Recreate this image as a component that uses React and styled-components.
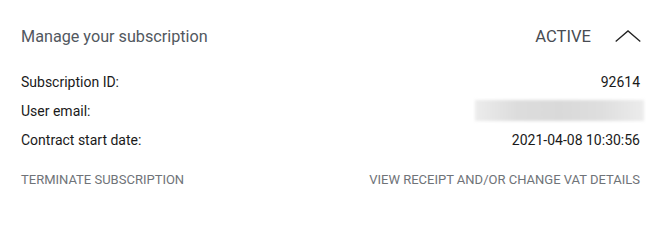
import React from "react";
import styled, { createGlobalStyle } from "styled-components";

const GlobalStyle = createGlobalStyle`
  html, body {
    margin: 0;
    padding: 0;
    background: #ffffff;
  }
  body {
    font-family: Roboto, "Liberation Sans", Arial, sans-serif;
  }
`;

const rows = [
  { label: "Subscription ID:", value: "92614" },
  { label: "User email:", value: null },
  { label: "Contract start date:", value: "2021-04-08 10:30:56" },
];

const App = () => (
  <>
    <GlobalStyle />
    <Card>
      <Header>
        <Title>Manage your subscription</Title>
        <Status>
          <StatusText>ACTIVE</StatusText>
          <ChevronUp />
        </Status>
      </Header>
      <Details>
        {rows.map((row) => (
          <Row key={row.label}>
            <Label>{row.label}</Label>
            {row.value ? <Value>{row.value}</Value> : <Redacted />}
          </Row>
        ))}
      </Details>
      <Actions>
        <ActionLink>Terminate subscription</ActionLink>
        <ActionLink>View receipt and/or change VAT details</ActionLink>
      </Actions>
    </Card>
  </>
);

const ChevronUp = () => (
  <Chevron viewBox="0 0 26 12" width="26" height="12">
    <path d="M0.7 11.5 L13 0.9 L25.3 11.5" fill="none" stroke="#222" strokeWidth="1.3" />
  </Chevron>
);

//STYLED-COMPONENTS

const Card = styled.div`
  width: 662px;
  height: 209px;
  box-sizing: border-box;
  padding: 24px 22px 0 21px;
  background: #fff;
`;

const Header = styled.div`
  display: flex;
  justify-content: space-between;
  align-items: center;
  height: 24px;
`;

const Title = styled.div`
  font-size: 16.2px;
  font-weight: 400;
  color: #525860;
`;

const Status = styled.div`
  display: flex;
  align-items: center;
  gap: 24px;
`;

const StatusText = styled.span`
  font-size: 16.6px;
  color: #484c52;
`;

const Chevron = styled.svg`
  display: block;
  margin-right: -1px;
`;

const Details = styled.div`
  display: flex;
  flex-direction: column;
  margin-top: 19px;
`;

const Row = styled.div`
  display: flex;
  justify-content: space-between;
  align-items: center;
  height: 29px;
  font-size: 14px;
  color: #1a1a1a;
`;

const Label = styled.span``;

const Value = styled.span``;

const Redacted = styled.div`
  width: 169px;
  height: 21px;
  margin-right: -4px;
  background: linear-gradient(
    90deg,
    #ececec 0%,
    #dcdcdc 25%,
    #d9d9d9 50%,
    #dedede 75%,
    #ececec 100%
  );
  filter: blur(1.5px);
`;

const Actions = styled.div`
  display: flex;
  justify-content: space-between;
  margin-top: 18px;
`;

const ActionLink = styled.span`
  font-size: 13px;
  text-transform: uppercase;
  color: #6f7378;
  cursor: pointer;
`;

export default App;
